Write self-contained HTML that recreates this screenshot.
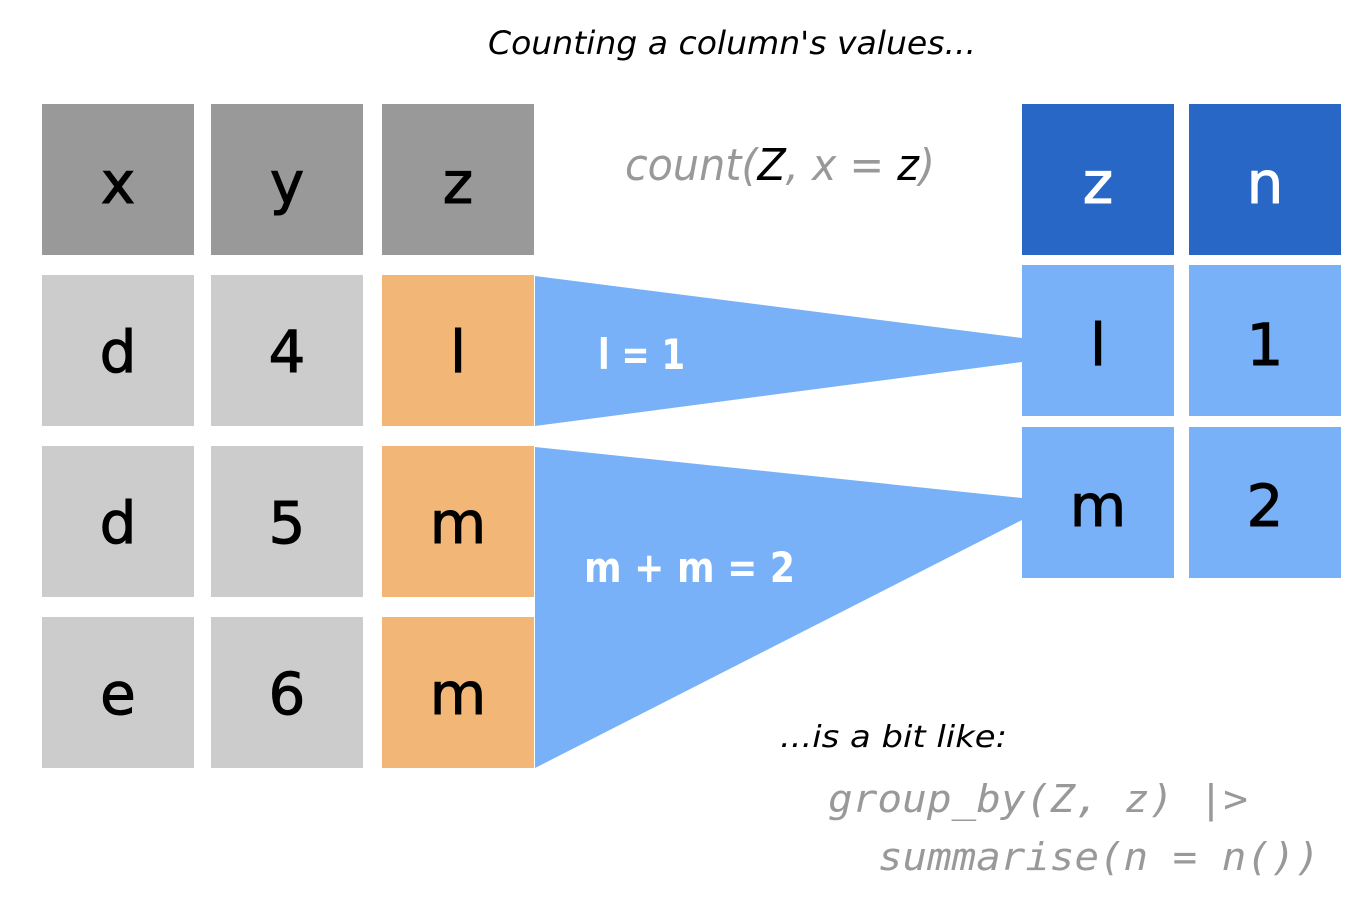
<!DOCTYPE html><html><head><style>html,body{margin:0;padding:0;background:#fff}svg{display:block}</style></head><body>
<svg width="1368" height="900" xmlns="http://www.w3.org/2000/svg" font-family="DejaVu Sans, Liberation Sans, sans-serif">
<text x="488" y="54" font-size="32" font-style="italic" textLength="488" lengthAdjust="spacingAndGlyphs">Counting a column's values...</text>
<g fill="#999"><rect x="42" y="104" width="152" height="151"/><rect x="211" y="104" width="152" height="151"/><rect x="382" y="104" width="152" height="151"/></g>
<g fill="#ccc"><rect x="42" y="275" width="152" height="151"/><rect x="211" y="275" width="152" height="151"/>
<rect x="42" y="446" width="152" height="151"/><rect x="211" y="446" width="152" height="151"/>
<rect x="42" y="617" width="152" height="151"/><rect x="211" y="617" width="152" height="151"/></g>
<g fill="#f2b677"><rect x="382" y="275" width="152" height="151"/><rect x="382" y="446" width="152" height="151"/><rect x="382" y="617" width="152" height="151"/></g>
<g fill="#2967c7"><rect x="1022" y="104" width="152" height="151"/><rect x="1189" y="104" width="152" height="151"/></g>
<g fill="#78b1f7"><rect x="1022" y="265" width="152" height="151"/><rect x="1189" y="265" width="152" height="151"/>
<rect x="1022" y="427" width="152" height="151"/><rect x="1189" y="427" width="152" height="151"/>
<polygon points="535,276 1022,338 1022,362 535,426"/><polygon points="535,447 1022,498 1022,520 535,768"/></g>
<g font-size="58" text-anchor="middle" stroke="currentColor" stroke-width="1">
<g color="#000"><text x="118" y="203">x</text><text x="287" y="203">y</text><text x="458" y="203">z</text>
<text x="118" y="372">d</text><text x="287" y="372">4</text><text x="458" y="372">l</text>
<text x="118" y="543">d</text><text x="287" y="543">5</text><text x="458" y="543">m</text>
<text x="118" y="714">e</text><text x="287" y="714">6</text><text x="458" y="714">m</text>
<text x="1098" y="365">l</text><text x="1265" y="365">1</text>
<text x="1098" y="526">m</text><text x="1265" y="526">2</text></g>
<g color="#fff" fill="#fff"><text x="1098" y="203">z</text><text x="1265" y="203">n</text></g>
</g>
<text x="625" y="180" font-size="44" font-style="italic" fill="#999" textLength="310" lengthAdjust="spacingAndGlyphs">count(<tspan fill="#000">Z</tspan>, x = <tspan fill="#000">z</tspan>)</text>
<g fill="#fff" font-weight="bold" font-size="42">
<text x="598" y="369" textLength="87" lengthAdjust="spacingAndGlyphs">l = 1</text>
<text x="584" y="582" textLength="211" lengthAdjust="spacingAndGlyphs">m + m = 2</text></g>
<text x="780" y="747" font-size="30" font-style="italic" textLength="227" lengthAdjust="spacingAndGlyphs">...is a bit like:</text>
<g font-family="DejaVu Sans Mono, Liberation Mono, monospace" font-style="italic" fill="#999" font-size="38">
<text x="828" y="812" textLength="420" lengthAdjust="spacingAndGlyphs">group_by(Z, z) |&gt;</text>
<text x="878" y="870" textLength="442" lengthAdjust="spacingAndGlyphs">summarise(n = n())</text></g>
</svg></body></html>
